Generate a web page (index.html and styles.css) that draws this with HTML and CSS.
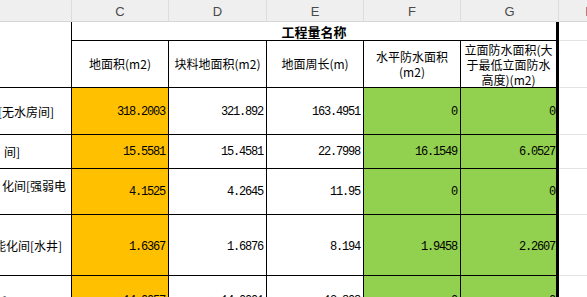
FILE: index.html
```html
<!DOCTYPE html>
<html lang="zh-CN">
<head>
<meta charset="utf-8">
<title>工程量名称</title>
<link rel="stylesheet" href="styles.css">
</head>
<body>
<div class="sheet">
  <div class="ch"></div>
  <div class="ch">C</div>
  <div class="ch">D</div>
  <div class="ch">E</div>
  <div class="ch">F</div>
  <div class="ch">G</div>
  <div class="ch ch-h">H</div>

  <div class="name-head"></div>
  <div class="title">工程量名称</div>
  <div class="h-cell h-title"></div>

  <div class="hd">地面积(m2)</div>
  <div class="hd">块料地面积(m2)</div>
  <div class="hd">地面周长(m)</div>
  <div class="hd">水平防水面积<br>(m2)</div>
  <div class="hd hd-last">立面防水面积(大<br>于最低立面防水<br>高度)(m2)</div>
  <div class="h-cell"></div>

  <div class="nm pad-a">[无水房间]</div>
  <div class="num orange">318.2003</div>
  <div class="num">321.892</div>
  <div class="num">163.4951</div>
  <div class="num green">0</div>
  <div class="num green last">0</div>
  <div class="h-cell"></div>

  <div class="nm pad-e">间]</div>
  <div class="num orange">15.5581</div>
  <div class="num">15.4581</div>
  <div class="num">22.7998</div>
  <div class="num green">16.1549</div>
  <div class="num green last">6.0527</div>
  <div class="h-cell"></div>

  <div class="nm nm-top pad-b">化间[强弱电</div>
  <div class="num orange">4.1525</div>
  <div class="num">4.2645</div>
  <div class="num">11.95</div>
  <div class="num green">0</div>
  <div class="num green last">0</div>
  <div class="h-cell"></div>

  <div class="nm pad-c">能化间[水井]</div>
  <div class="num orange low">1.6367</div>
  <div class="num low">1.6876</div>
  <div class="num low">8.194</div>
  <div class="num green low">1.9458</div>
  <div class="num green last low">2.2607</div>
  <div class="h-cell"></div>

  <div class="nm nm-end pad-d">]</div>
  <div class="num orange">14.0057</div>
  <div class="num">14.0001</div>
  <div class="num">13.808</div>
  <div class="num green">0</div>
  <div class="num green last">0</div>
  <div class="h-cell"></div>
</div>
</body>
</html>
```
FILE: styles.css
```css
html, body {
  margin: 0;
  padding: 0;
  background: #ffffff;
  overflow: hidden;
}

body {
  width: 587px;
  height: 297px;
  font-family: "Noto Sans CJK SC", "Liberation Sans", sans-serif;
  color: #000000;
}

.sheet {
  display: grid;
  grid-template-columns: 72px 97px 98px 97px 97px 98px 62px;
  grid-template-rows: 22px 19px 47px 47px 34px 46px 61px 50px;
  box-sizing: border-box;
}

.sheet > div {
  box-sizing: border-box;
  min-width: 0;
  overflow: hidden;
}

/* column header strip */
.ch {
  background: #efefef;
  border-right: 1px solid #dcdcdc;
  border-bottom: 1px solid #d6d6d6;
  font-family: "Liberation Sans", "DejaVu Sans", sans-serif;
  font-size: 13px;
  color: #4a4a4a;
  display: flex;
  align-items: center;
  justify-content: center;
  padding-top: 1px;
}

.ch-h {
  border-right: none;
  color: #6a4a7a;
}

/* merged name header (B, rows 1-2) */
.name-head {
  grid-row: span 2;
  border-right: 1px solid #000;
  border-bottom: 1px solid #000;
}

.title {
  grid-column: span 5;
  border-bottom: 1px solid #000;
  border-right: 3px solid #000;
  font-size: 13px;
  font-weight: 700;
  display: flex;
  align-items: center;
  justify-content: center;
  line-height: 1;
}

.h-cell {
  border-bottom: 1px solid #e3e3e3;
}

.hd {
  border-right: 1px solid #000;
  border-bottom: 1px solid #000;
  font-size: 12px;
  line-height: 15px;
  display: flex;
  align-items: center;
  justify-content: center;
  text-align: center;
  padding-bottom: 1px;
}

.hd-last {
  border-right: 3px solid #000;
  padding-top: 2px;
}

/* name column (partially scrolled out of view) */
.nm {
  border-right: 1px solid #000;
  border-bottom: 1px solid #000;
  font-size: 12px;
  line-height: 15px;
  display: flex;
  align-items: center;
  justify-content: flex-end;
  white-space: nowrap;
}

.nm-top {
  align-items: flex-start;
  padding-top: 9px;
}

.nm-end {
  align-items: flex-start;
  padding-top: 17px;
  border-bottom: none;
}

.pad-a { padding-right: 17px; }
.pad-b { padding-right: 5px; }
.pad-c { padding-right: 9px; }
.pad-d { padding-right: 64px; }
.pad-e { padding-right: 51px; }

/* numbers */
.num {
  border-right: 1px solid #000;
  border-bottom: 1px solid #000;
  font-family: "Liberation Mono", "DejaVu Sans Mono", monospace;
  font-size: 12px;
  letter-spacing: -1.2px;
  display: flex;
  align-items: center;
  justify-content: flex-end;
  padding-right: 3px;
  padding-top: 1px;
  white-space: nowrap;
}

.low {
  padding-top: 4px;
}

.orange { background: #ffc000; }
.green { background: #92d050; }

.last {
  border-right: 3px solid #000;
  padding-right: 1px;
}
```
